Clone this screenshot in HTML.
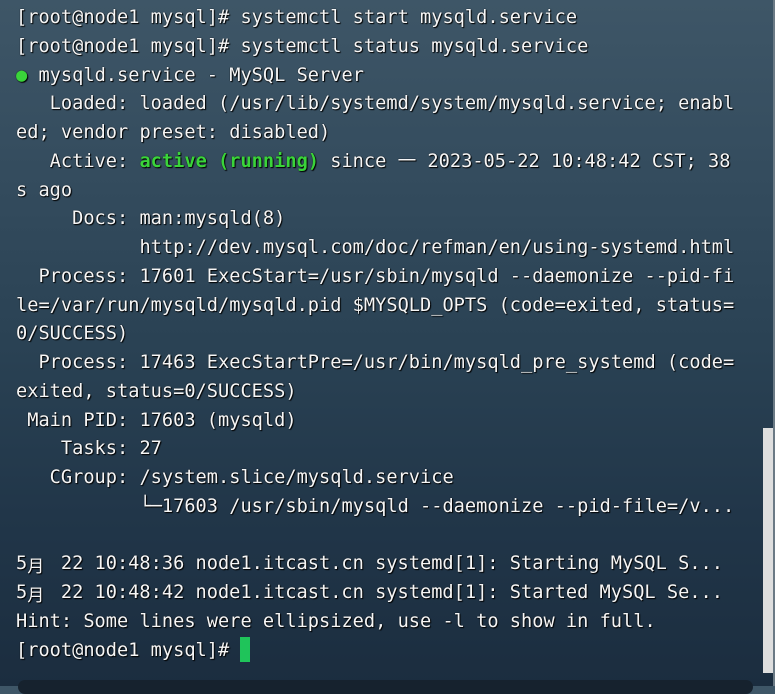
<!DOCTYPE html>
<html><head><meta charset="utf-8"><style>
html,body{margin:0;padding:0}
body{width:775px;height:686px;overflow:hidden;position:relative;
background:linear-gradient(180deg,#3e5667 0%,#344c5e 25%,#2a4254 50%,#213649 75%,#1b2d3f 100%);}
pre{position:absolute;left:16px;top:4px;margin:0;font-family:"DejaVu Sans Mono","Noto Sans CJK SC",monospace;
font-size:18.65px;line-height:28.75px;color:#f6f6f6;text-shadow:1px 1px 1px #000,0 0 1px #000;white-space:pre}
.g{color:#3ad43a;font-weight:bold}
.dot{color:#3ad43a}
.cj{display:inline-block;width:22.4px;height:20px;line-height:20px;font-family:"Noto Sans CJK SC",sans-serif;font-size:17px;vertical-align:-3px;overflow:visible}
.cur{display:inline-block;width:10px;height:25px;background:#1fc45a;vertical-align:-6px}
.sb{position:absolute;left:763px;top:428px;width:10px;height:245px;background:#dedede}
.edge{position:absolute;left:773px;top:0;width:2px;height:686px;background:#6b7a85}
.bar{position:absolute;left:18px;top:680px;width:735px;height:14px;border-radius:8px;background:#16222e}
</style></head><body>
<pre>[root@node1 mysql]# systemctl start mysqld.service
[root@node1 mysql]# systemctl status mysqld.service
<span class="dot">●</span> mysqld.service - MySQL Server
   Loaded: loaded (/usr/lib/systemd/system/mysqld.service; enabl
ed; vendor preset: disabled)
   Active: <span class="g">active (running)</span> since 一 2023-05-22 10:48:42 CST; 38
s ago
     Docs: man:mysqld(8)
           http://dev.mysql.com/doc/refman/en/using-systemd.html
  Process: 17601 ExecStart=/usr/sbin/mysqld --daemonize --pid-fi
le=/var/run/mysqld/mysqld.pid $MYSQLD_OPTS (code=exited, status=
0/SUCCESS)
  Process: 17463 ExecStartPre=/usr/bin/mysqld_pre_systemd (code=
exited, status=0/SUCCESS)
 Main PID: 17603 (mysqld)
    Tasks: 27
   CGroup: /system.slice/mysqld.service
           └─17603 /usr/sbin/mysqld --daemonize --pid-file=/v...

5<span class="cj">月</span> 22 10:48:36 node1.itcast.cn systemd[1]: Starting MySQL S...
5<span class="cj">月</span> 22 10:48:42 node1.itcast.cn systemd[1]: Started MySQL Se...
Hint: Some lines were ellipsized, use -l to show in full.
[root@node1 mysql]# <span class="cur"></span></pre>
<div class="sb"></div><div class="edge"></div><div class="bar"></div>
</body></html>
